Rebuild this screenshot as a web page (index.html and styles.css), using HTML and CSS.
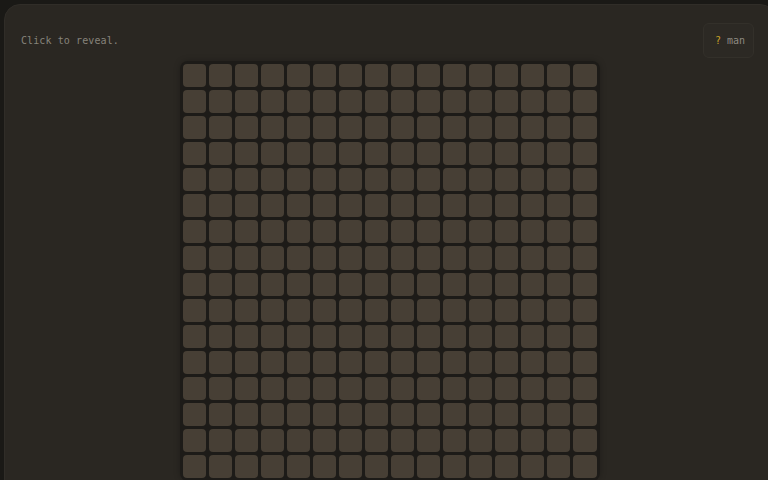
FILE: index.html
```html
<!DOCTYPE html>
<html lang="en">
<head>
<meta charset="utf-8">
<title>Reveal</title>
<link rel="stylesheet" href="styles.css">
</head>
<body>
<main class="panel">
  <header class="bar">
    <p class="hint">Click to reveal.</p>
    <button class="man-btn" type="button"><span class="q">?</span> man</button>
  </header>
  <section class="board-wrap">
    <div class="board" id="board"></div>
  </section>
</main>
<script>
  var b = document.getElementById('board');
  for (var i = 0; i < 256; i++) {
    var c = document.createElement('div');
    c.className = 'cell';
    b.appendChild(c);
  }
</script>
</body>
</html>
```

FILE: styles.css
```css
html, body {
  margin: 0;
  padding: 0;
  background: #1a1916;
  overflow: hidden;
  width: 768px;
  height: 480px;
}

body {
  font-family: "DejaVu Sans Mono", "Liberation Mono", monospace;
}

.panel {
  box-sizing: border-box;
  margin: 4px 0 0 4px;
  width: 772px;
  height: 600px;
  padding: 18px 21px 0 16px;
  background: #2a2722;
  border: 1px solid #302d28;
  border-radius: 16px;
  display: flex;
  flex-direction: column;
  gap: 3px;
}

.bar {
  display: flex;
  align-items: center;
  justify-content: space-between;
  height: 35px;
}

.hint {
  margin: 0;
  font-size: 10px;
  letter-spacing: 0.1px;
  color: #86837b;
}

.man-btn {
  box-sizing: border-box;
  height: 35px;
  width: 51px;
  padding: 0 0 0 11px;
  text-align: left;
  font-family: inherit;
  font-size: 10px;
  color: #8e8a82;
  background: #2c2924;
  border: 1px solid #33302a;
  border-radius: 6px;
}

.q {
  color: #c9a227;
}

.board-wrap {
  display: flex;
  justify-content: center;
  padding-left: 4px;
}

.board {
  box-sizing: border-box;
  width: 420px;
  padding: 3px;
  display: grid;
  grid-template-columns: repeat(16, 1fr);
  gap: 3px;
  background: #1d1b18;
  border-radius: 8px;
  box-shadow: 0 0 6px rgba(0, 0, 0, 0.25);
}

.cell {
  aspect-ratio: 1 / 1;
  background: #473f35;
  border-radius: 4px;
}
```
